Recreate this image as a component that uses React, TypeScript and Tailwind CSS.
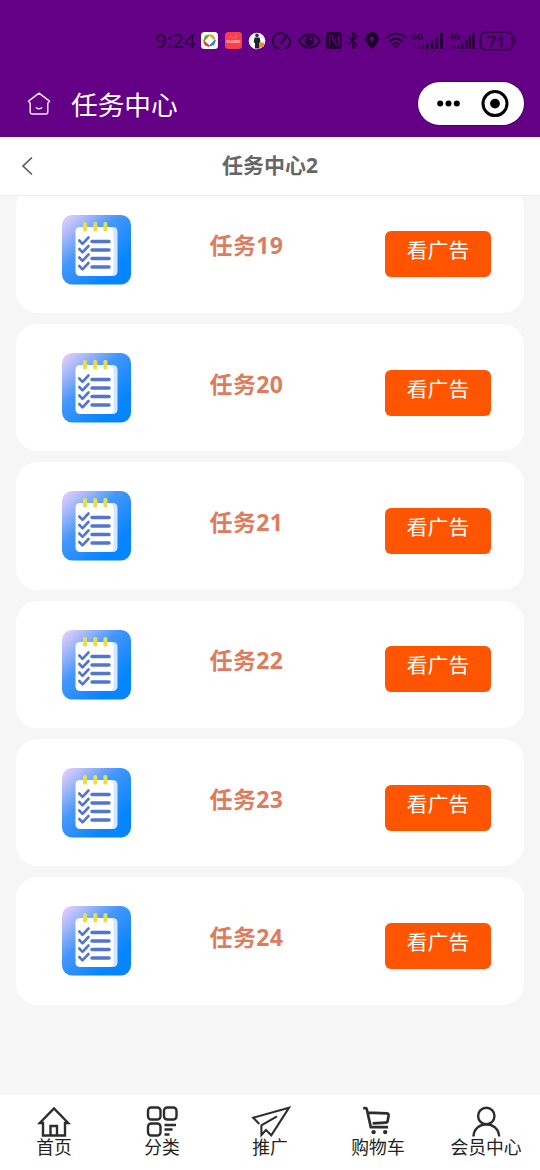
import React from 'react';

const tasks = [19, 20, 21, 22, 23, 24];

function SignalBars({ label, compact }: { label: string; compact?: boolean }) {
  return (
    <svg width={compact ? 26 : 32} height="18" viewBox={compact ? '0 0 26 18' : '0 0 32 18'} fill="#250034">
      <text x="0" y="8" fontSize="9" fontWeight="700" fontFamily="Roboto, sans-serif">
        {label}
      </text>
      {compact ? (
        <>
          <path d="M2 12h2v5H2zM5 14h2v3H5z" opacity=".35" />
          <path d="M8 14h2.5v3H8zM12 11h2.5v6H12zM16 8h2.5v9H16zM19.7 4h2.5v13h-2.5zM23.3 1h2.5v16h-2.5z" />
        </>
      ) : (
        <>
          <path d="M2 12h2v5H2zM6 14h2v3H6z" opacity=".35" />
          <path d="M9.5 14h2.5v3H9.5zM14 12h2.8v5H14zM18.7 9h2.8v8h-2.8zM23.4 5h2.8v12h-2.8zM28 1h3v16h-3z" />
        </>
      )}
    </svg>
  );
}

function StatusBar() {
  return (
    <div className="flex h-[70px] items-center pl-[155px] pt-[11px]">
      <span className="w-[46px] shrink-0 font-['Noto_Sans'] text-[20.5px] leading-none text-[#250034]">
        9:24
      </span>
      {/* Notification icons */}
      <svg width="17" height="17" viewBox="0 0 17 17">
        <rect width="17" height="17" rx="3.5" fill="#fff" />
        <path d="M3 8.8 7.8 3.3 4.5 4.2z" fill="#58ae35" stroke="#58ae35" strokeWidth="1.5" strokeLinejoin="round" />
        <path d="M9 3.2 13.3 7 12 4.2z" fill="#f5a21c" stroke="#f5a21c" strokeWidth="1.8" strokeLinejoin="round" />
        <path d="m14 8.5-4.8 5 3.4-1.2z" fill="#2687c9" stroke="#2687c9" strokeWidth="1.5" strokeLinejoin="round" />
        <path d="m3.3 9.8 4.5 4-3.3-1.2z" fill="#e13b2b" stroke="#e13b2b" strokeWidth="1.8" strokeLinejoin="round" />
      </svg>
      <svg className="ml-[7px]" width="17" height="17" viewBox="0 0 17 17">
        <rect width="17" height="17" rx="3.5" fill="#fa3f4c" />
        <path d="M5.5 3.5c0 3 6 3 6 0" fill="none" stroke="#ff8c8c" strokeWidth=".8" />
        <text
          x="8.5"
          y="11"
          textAnchor="middle"
          fontSize="3.7"
          fontWeight="700"
          fontFamily="Roboto, sans-serif"
          fill="#ffc5c5"
        >
          HUAWEI
        </text>
      </svg>
      <svg className="ml-[6px]" width="18" height="18" viewBox="0 0 18 18">
        <circle cx="9" cy="9" r="8.3" fill="#fff" />
        <circle cx="9" cy="3.4" r="1.8" fill="#243147" />
        <path d="M6.5 5.5h5.2l.8 5-1 .5v5.5H7V11l-1.3-.5z" fill="#1b2434" />
        <path d="M11 10.5h5v4.5h-5z" fill="#f3873c" />
      </svg>

      {/* System icons */}
      <svg className="ml-[6px]" width="20" height="18" viewBox="0 0 20 18" fill="none" stroke="#250034" strokeWidth="2.1">
        <path d="M4.5 16A8 8 0 0 1 13 2.3M16.8 5.5A8 8 0 0 1 15 16M3.5 16h4M12.5 16h4" />
        <path d="m8.5 12 7-9" strokeWidth="2.6" />
      </svg>
      <svg className="ml-[6px]" width="23" height="16" viewBox="0 0 23 16" fill="none" stroke="#250034" strokeWidth="2.2">
        <path d="M1.2 8C6-.8 17-.8 21.8 8 17 16.8 6 16.8 1.2 8Z" />
        <circle cx="11.5" cy="8" r="4.8" fill="#250034" stroke="none" />
        <circle cx="13" cy="6" r="1.4" fill="#640085" stroke="none" />
      </svg>
      <svg className="ml-[5px]" width="16" height="17" viewBox="0 0 16 17">
        <rect width="16" height="17" rx="3.5" fill="#250034" />
        <path
          d="M3.6 14V3.2h1.8l5 8.8M12.4 3v10.8h-1.8l-5-8.8"
          fill="none"
          stroke="#640085"
          strokeWidth="1"
        />
      </svg>
      <svg className="ml-[5px]" width="12" height="17" viewBox="0 0 12 17" fill="none" stroke="#250034" strokeWidth="1.8">
        <path d="m1.3 4.5 8.7 8-4 3.3V1.2l4 3.3-8.7 8" />
      </svg>
      <svg className="ml-[6px]" width="14" height="17" viewBox="0 0 14 17">
        <path
          fill="#1b0026"
          fillRule="evenodd"
          d="M7 0a6.7 6.7 0 0 1 6.7 6.7C13.7 11 7 17 7 17S.3 11 .3 6.7A6.7 6.7 0 0 1 7 0Zm0 4.5a2.2 2.2 0 1 0 0 4.4 2.2 2.2 0 0 0 0-4.4Z"
        />
      </svg>
      <svg className="ml-[6px]" width="22" height="17" viewBox="0 0 22 17" fill="none" stroke="#250034" strokeWidth="2">
        <path d="M1 6.2C7 .2 15 .2 21 6.2M4.2 9.7c4-4 9.6-4 13.6 0M7.2 12.7c2.4-2.2 5.2-2.2 7.6 0" />
        <path d="M8.5 14c1.6-1.2 3.4-1.2 5 0L11 16.5z" fill="#250034" stroke="none" />
      </svg>
      <div className="ml-[5px] flex gap-[5px]">
        <SignalBars label="5G" />
        <SignalBars label="4G" compact />
      </div>
      <svg className="ml-[4px] shrink-0" width="38" height="20" viewBox="0 0 38 20">
        <rect x="1.5" y="1.2" width="32" height="17.6" rx="5" fill="none" stroke="#310043" strokeWidth="1.8" />
        <path d="M35.5 7v6c1.8-1 1.8-5 0-6Z" fill="#250034" />
        <text x="17.5" y="15.5" textAnchor="middle" fontSize="15.5" fontWeight="600" fontFamily="Roboto, sans-serif" fill="#310043">
          71
        </text>
      </svg>
    </div>
  );
}

function AppHeader() {
  return (
    <header className="h-[137px] shrink-0 bg-[#640085]">
      <StatusBar />
      <div className="flex h-[67px] items-center pl-[27px] pr-4">
        <svg
          width="24"
          height="24"
          viewBox="0 0 24 24"
          fill="none"
          stroke="#f8e6ff"
          strokeWidth="1.5"
          strokeLinecap="round"
          strokeLinejoin="round"
        >
          <path d="M12 1.2 1.5 9.2l1.7 2V20a2 2 0 0 0 2 2h13.6a2 2 0 0 0 2-2v-8.8l1.7-2z" />
          <path d="M9.4 15.7c1.4 1.3 3.8 1.3 5.2 0" />
        </svg>
        <h1 className="ml-5 pt-[3px] text-[26.7px] font-normal leading-none text-white">任务中心</h1>
        <div className="ml-auto flex h-[43px] w-[106px] items-center rounded-full bg-white shadow-[0_0_1px_1px_#4b0065]">
          <svg width="106" height="43" viewBox="0 0 106 43">
            <circle cx="22.2" cy="21.5" r="3" />
            <circle cx="30.5" cy="21.5" r="3" />
            <circle cx="38.8" cy="21.5" r="3" />
            <circle cx="77" cy="21.6" r="12" fill="none" stroke="#000" strokeWidth="3" />
            <circle cx="77" cy="21.6" r="4.9" />
          </svg>
        </div>
      </div>
    </header>
  );
}

function NotepadIcon() {
  const rows = [26.5, 35, 43.5, 52];
  return (
    <svg width="69" height="70" viewBox="0 0 69 70">
      <defs>
        <linearGradient id="tile" x1="0" y1="0" x2=".75" y2=".8">
          <stop offset="0" stopColor="#eed2fa" />
          <stop offset=".2" stopColor="#b2bdfb" />
          <stop offset=".52" stopColor="#4497fa" />
          <stop offset="1" stopColor="#0784ff" />
        </linearGradient>
      </defs>
      <rect width="69" height="69.5" rx="10" fill="url(#tile)" />
      <rect x="17" y="12" width="38.5" height="49" rx="4.5" fill="#d5e7ff" />
      <rect x="13.5" y="12" width="38" height="49" rx="4.5" fill="#fff" />
      <g fill="#e5df48">
        <rect x="21" y="7" width="4" height="9.5" rx="1.5" />
        <rect x="31.3" y="7" width="4" height="9.5" rx="1.5" />
        <rect x="41.4" y="7" width="4" height="9.5" rx="1.5" />
      </g>
      <g fill="none" stroke="#5275cf" strokeLinecap="round" strokeLinejoin="round">
        {rows.map((y) => (
          <g key={y}>
            <path d={`M17.3 ${y - 1}l3.2 3.3 6-6.3`} strokeWidth="2.6" />
            <path d={`M30 ${y}h17`} strokeWidth="3.5" />
          </g>
        ))}
      </g>
    </svg>
  );
}

function TaskCard({ id }: { id: number }) {
  return (
    <div className="flex h-[127.3px] shrink-0 items-start rounded-[21px] bg-white pl-[46px] pr-[33px] pt-[29px]">
      <NotepadIcon />
      <div className="ml-[78.5px] mt-[18.5px] text-[23px] font-bold leading-6 tracking-[0.4px] text-[#dc7d60]">
        任务{id}
      </div>
      <button className="ml-auto mt-[16.5px] flex h-[46px] w-[106px] justify-center rounded-[6px] bg-[#ff5500] pt-[8px] text-[20.8px] leading-[22px] text-white">
        看广告
      </button>
    </div>
  );
}

const tabs = [
  {
    label: '首页',
    icon: (
      <>
        <path d="M5 17.5H1.8L16 3l14.2 14.5H27V30H5z" />
        <path d="M12.5 30V20.5h6.5V30" />
      </>
    ),
  },
  {
    label: '分类',
    icon: (
      <>
        <rect x="2" y="2" width="12.5" height="12" rx="3.2" />
        <rect x="18" y="2" width="12.5" height="12" rx="3.2" />
        <rect x="2" y="18" width="12.5" height="12" rx="3.2" />
        <path d="M18.5 19.5h11.5M18.5 24h8M18.5 29h5" />
      </>
    ),
  },
  {
    label: '推广',
    icon: (
      <path
        d="m5.3 18.5-6.1-6.3L35 2.2 17.3 29.8l-5.3-5.2-4.6 4.9v-9.7l15.6-9"
        strokeWidth="2.1"
      />
    ),
  },
  {
    label: '购物车',
    icon: (
      <>
        <path
          d="M1.2 2.6h2.3q1 0 1.3 1.2l4 17.8H26M6 7.2l18.8.7q2 .2 1.8 2.2l-.9 5.2q-.3 1.8-2 1.9l-13 .6"
          strokeWidth="2.7"
        />
        <circle cx="11.6" cy="26.6" r="2.2" fill="#2d2d2d" stroke="none" />
        <circle cx="23.2" cy="26.6" r="2.2" fill="#2d2d2d" stroke="none" />
      </>
    ),
  },
  {
    label: '会员中心',
    icon: (
      <>
        <circle cx="16.3" cy="10.5" r="8.2" />
        <path d="M3.4 31c1-16.2 24.8-16.2 25.8 0" />
      </>
    ),
  },
];

function TabBar() {
  return (
    <nav className="grid h-[75px] shrink-0 grid-cols-5 bg-white pt-[10.5px]">
      {tabs.map((tab) => (
        <div key={tab.label} className="flex flex-col items-center">
          <svg
            className="overflow-visible"
            width="32"
            height="31"
            viewBox="0 0.5 32 31"
            fill="none"
            stroke="#2d2d2d"
            strokeWidth="2.4"
          >
            {tab.icon}
          </svg>
          <span className="text-[17.8px] leading-5 text-[#222]">{tab.label}</span>
        </div>
      ))}
    </nav>
  );
}

export default function App() {
  return (
    <div className="flex h-[1170px] w-[540px] flex-col overflow-hidden bg-[#f6f6f6] font-['Noto_Sans','Noto_Sans_CJK_SC',sans-serif]">
      <AppHeader />

      {/* Page title */}
      <div className="grid h-[59px] shrink-0 grid-cols-3 items-center border-b border-[#ebebeb] bg-white">
        <svg className="ml-[21px]" width="13" height="20" viewBox="0 0 13 20" fill="none" stroke="#555" strokeWidth="1.6">
          <path d="M11 1.5 2 10l9 8.5" />
        </svg>
        <h2 className="pb-[2px] text-center text-[21px] font-bold leading-none text-[#666]">任务中心2</h2>
      </div>

      {/* Task list, scrolled to the end */}
      <main className="min-h-0 flex-1 overflow-hidden px-4">
        <div className="-mt-[10.2px] flex flex-col gap-[11px]">
          {tasks.map((id) => (
            <TaskCard key={id} id={id} />
          ))}
        </div>
      </main>

      <TabBar />
    </div>
  );
}
